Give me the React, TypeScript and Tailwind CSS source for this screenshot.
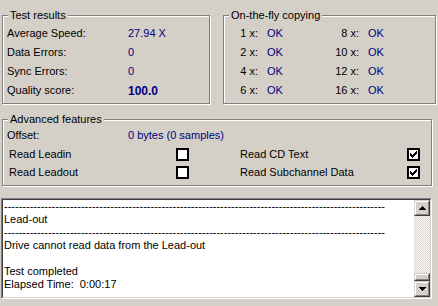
const face = 'bg-[#d4d0c8]'

function Group({ title, className, children }: { title: string; className: string; children?: React.ReactNode }) {
  return (
    <div className={`border border-[#808080] shadow-[inset_1px_1px_0_#fff,1px_1px_0_#fff] ${className}`}>
      <div className={`-mt-[7px] ml-[5px] w-fit px-[2px] leading-[13px] ${face}`}>{title}</div>
      {children}
    </div>
  )
}

function CheckBox({ checked }: { checked?: boolean }) {
  return (
    <div className="flex h-[13px] w-[13px] items-center justify-center border-2 border-black bg-white">
      {checked && (
        <svg width="7" height="7" viewBox="0 0 7 7" shapeRendering="crispEdges">
          <path d="M0 2h1v3H0zM1 3h1v3H1zM2 4h1v3H2zM3 3h1v3H3zM4 2h1v3H4zM5 1h1v3H5zM6 0h1v3H6z" fill="#000" />
        </svg>
      )}
    </div>
  )
}

function Raised({ className, children }: { className: string; children?: React.ReactNode }) {
  return (
    <div className={`border border-t-[#d4d0c8] border-l-[#d4d0c8] border-b-[#404040] border-r-[#404040] ${className}`}>
      <div className={`flex h-full w-full items-center justify-center border border-t-white border-l-white border-b-[#808080] border-r-[#808080] ${face}`}>
        {children}
      </div>
    </div>
  )
}

const results = [
  ['Average Speed:', '27.94 X'],
  ['Data Errors:', '0'],
  ['Sync Errors:', '0'],
  ['Quality score:', '100.0'],
]

const copying = [
  ['1 x:', '8 x:'],
  ['2 x:', '10 x:'],
  ['4 x:', '12 x:'],
  ['6 x:', '16 x:'],
]

const dashes = '-'.repeat(104)
const log = [dashes, 'Lead-out', dashes, 'Drive cannot read data from the Lead-out', '', 'Test completed', 'Elapsed Time:  0:00:17']

export default function App() {
  return (
    <div className={`h-[306px] w-[438px] overflow-hidden pt-[15px] font-['Liberation_Sans',Arial,sans-serif] text-[11px] text-black ${face}`}>
      {/* top row */}
      <div className="flex pl-[2px]">
        <Group title="Test results" className="h-[89px] w-[208px]">
          <div className="mt-[2px]">
            {results.map(([label, value], i) => (
              <div key={label} className="flex h-[19px] items-center pl-[4px]">
                <span className="w-[121px]">{label}</span>
                <span className={`text-[#000080] ${i === 3 ? 'font-bold text-[12px]' : ''}`}>{value}</span>
              </div>
            ))}
          </div>
        </Group>
        <Group title="On-the-fly copying" className="ml-[13px] h-[89px] w-[213px]">
          <div className="mt-[2px]">
            {copying.map(([a, b]) => (
              <div key={a} className="flex h-[19px] items-center">
                <span className="w-[34px] text-right">{a}</span>
                <span className="ml-[9px] w-[58px] text-[#000080]">OK</span>
                <span className="w-[34px] text-right">{b}</span>
                <span className="ml-[9px] text-[#000080]">OK</span>
              </div>
            ))}
          </div>
        </Group>
      </div>

      {/* advanced features */}
      <Group title="Advanced features" className="ml-[2px] mt-[15px] h-[67px] w-[430px]">
        <div className="flex h-[18px] items-center pl-[4px]">
          <span className="w-[121px]">Offset:</span>
          <span className="text-[#000080]">0 bytes (0 samples)</span>
        </div>
        <div className="mt-[1px] flex h-[18px] items-center pl-[6px]">
          <span className="w-[167px]">Read Leadin</span>
          <CheckBox />
          <span className="ml-[51px] w-[167px]">Read CD Text</span>
          <CheckBox checked />
        </div>
        <div className="flex h-[18px] items-center pl-[6px]">
          <span className="w-[167px]">Read Leadout</span>
          <CheckBox />
          <span className="ml-[51px] w-[167px]">Read Subchannel Data</span>
          <CheckBox checked />
        </div>
      </Group>

      {/* log */}
      <div className="ml-[1px] mt-[12px] h-[101px] w-[431px] border border-t-[#808080] border-l-[#808080] border-b-white border-r-white">
        <div className="flex h-full w-full border border-t-[#404040] border-l-[#404040] border-b-[#d4d0c8] border-r-[#d4d0c8]">
          <div className="flex-1 overflow-hidden whitespace-pre bg-white pl-[1px] leading-[13px]">
            {log.map((line, i) => (
              <div key={i} className="h-[13px]">{line}</div>
            ))}
          </div>
          <div className="flex w-[16px] flex-col">
            <Raised className="h-[16px]">
              <svg width="7" height="4" viewBox="0 0 7 4" shapeRendering="crispEdges">
                <path d="M3 0h1v1h1v1h1v1h1v1H0V3h1V2h1V1h1z" fill="#000" />
              </svg>
            </Raised>
            <div className="flex-1 bg-[image:repeating-conic-gradient(#fff_0_25%,#d4d0c8_0_50%)] bg-[length:2px_2px]" />
            <Raised className="h-[8px]" />
            <Raised className="h-[16px]">
              <svg width="7" height="4" viewBox="0 0 7 4" shapeRendering="crispEdges">
                <path d="M0 0h7v1H6v1H5v1H4v1H3V3H2V2H1V1H0z" fill="#000" />
              </svg>
            </Raised>
          </div>
        </div>
      </div>
    </div>
  )
}
